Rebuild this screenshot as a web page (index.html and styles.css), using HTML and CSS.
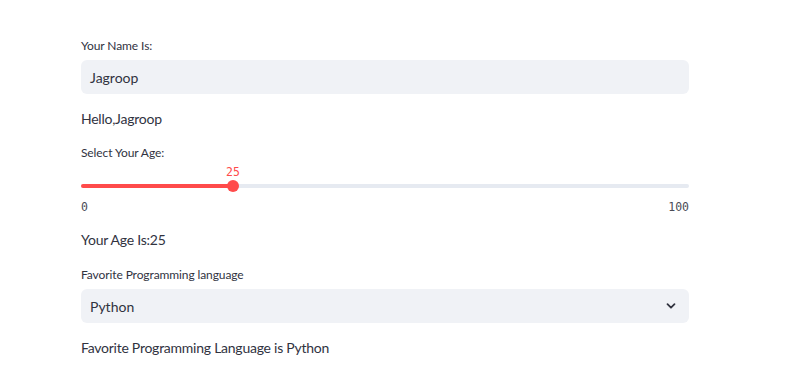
FILE: index.html
```html
<!DOCTYPE html>
<html lang="en">
<head>
  <meta charset="UTF-8" />
  <meta name="viewport" content="width=device-width, initial-scale=1" />
  <title>Streamlit App</title>
  <link rel="stylesheet" href="styles.css">
</head>
<body>
  <div class="main">
    <!-- Name input -->
    <div class="widget">
      <label class="label">Your Name Is:</label>
      <div class="field">Jagroop</div>
    </div>
    <p class="text">Hello,Jagroop</p>

    <!-- Age slider -->
    <div class="widget">
      <label class="label">Select Your Age:</label>
      <div class="slider">
        <div class="track">
          <div class="fill" style="width: 25%;"></div>
          <div class="thumb" style="left: 25%;">
            <span class="thumb-value">25</span>
          </div>
        </div>
        <div class="ticks">
          <span>0</span>
          <span>100</span>
        </div>
      </div>
    </div>
    <p class="text after-slider">Your Age Is:25</p>

    <!-- Language select -->
    <div class="widget">
      <label class="label">Favorite Programming language</label>
      <div class="field select">
        <span>Python</span>
        <svg class="chevron" viewBox="0 0 12 12" width="12" height="12">
          <path d="M2.5 4.2 6 7.7l3.5-3.5" fill="none" stroke="currentColor" stroke-width="1.8" stroke-linecap="round" stroke-linejoin="round"/>
        </svg>
      </div>
    </div>
    <p class="text">Favorite Programming Language is Python</p>
  </div>
</body>
</html>
```

FILE: styles.css
```css
/* Page */
body {
  margin: 0;
  background-color: #ffffff;
  color: #31333f;
  font-family: Lato, "Open Sans", sans-serif;
}

.main {
  width: 608px;
  margin-left: 81px;
  padding-top: 38px;
}

.widget {
  display: flex;
  flex-direction: column;
}

.label {
  font-size: 12px;
  line-height: 16px;
  margin-bottom: 6px;
  letter-spacing: -0.1px;
}

.field {
  height: 34px;
  background-color: #f0f2f6;
  border-radius: 6px;
  padding: 0 9px;
  display: flex;
  align-items: center;
  font-size: 14px;
}

.select {
  justify-content: space-between;
}

.chevron {
  color: #31333f;
  margin-right: 3px;
}

.text {
  margin: 15px 0 16px;
  font-size: 14px;
  line-height: 20px;
  letter-spacing: -0.25px;
}

.after-slider {
  margin-top: 16px;
  margin-bottom: 17px;
}

/* Slider */
.slider {
  padding-top: 17px;
}

.track {
  position: relative;
  height: 4px;
  background-color: #e6eaf1;
  border-radius: 2px;
}

.fill {
  height: 100%;
  background-color: #ff4b4b;
  border-radius: 2px;
}

.thumb {
  position: absolute;
  top: 50%;
  width: 12px;
  height: 12px;
  margin: -6px 0 0 -6px;
  border-radius: 50%;
  background-color: #ff4b4b;
}

.thumb-value {
  position: absolute;
  bottom: 13px;
  left: 50%;
  transform: translateX(-50%);
  font-family: "DejaVu Sans Mono", monospace;
  font-size: 11.5px;
  color: #ff4b4b;
}

.ticks {
  display: flex;
  justify-content: space-between;
  margin-top: 12px;
  font-family: "DejaVu Sans Mono", monospace;
  font-size: 11.5px;
  color: #4a4c56;
}
```
